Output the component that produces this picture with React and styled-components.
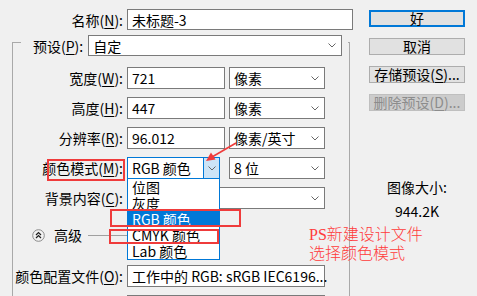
import React from 'react'
import styled, { createGlobalStyle } from 'styled-components'

const GlobalStyle = createGlobalStyle`
  html, body { margin: 0; padding: 0; background: #f0f0f0; }
  body {
    font-family: "Noto Sans CJK SC", "Noto Sans", sans-serif;
    font-size: 14px;
    color: #000;
  }
`;

const Page = styled.div`
  position: relative;
  width: 477px;
  height: 296px;
  overflow: hidden;
  box-sizing: border-box;
  padding-top: 9px;
  display: flex;
  align-items: flex-start;
`;

const Left = styled.div`
  width: 353px;
  display: flex;
  flex-direction: column;
`;

const NameRow = styled.div`
  display: flex;
  align-items: center;
  gap: 4px;
  height: 21px;
`;

const Label = styled.span`
  white-space: nowrap;
  line-height: 16px;
  text-align: right;
  width: ${p => p.$w || 'auto'};
  justify-self: end;
`;

const Key = styled.u`
  text-decoration: underline;
  text-underline-offset: 2px;
`;

const Field = styled.div`
  box-sizing: border-box;
  height: ${p => p.$h || 22}px;
  width: ${p => (p.$w ? p.$w + 'px' : '100%')};
  background: #fff;
  border: 1px solid ${p => (p.$active ? '#0078d7' : '#7a7a7a')};
  display: flex;
  align-items: center;
  justify-content: space-between;
  padding-left: 4px;
  padding-right: ${p => (p.$active ? 0 : 5)}px;
  line-height: 16px;
  white-space: nowrap;
  position: relative;
  grid-column: ${p => p.$span || 'auto'};
`;

const ArrowBox = styled.span`
  align-self: stretch;
  width: 15px;
  background: #cce4f7;
  border-left: 1px solid #0078d7;
  display: flex;
  align-items: center;
  justify-content: center;
`;

const Group = styled.fieldset`
  margin: -1px 0 0 12px;
  padding: 0 0 30px 0;
  width: 338px;
  box-sizing: border-box;
  border: 1px solid #a9a9a9;
  min-width: 0;
`;

const Legend = styled.legend`
  margin-left: 8px;
  padding: 6px 6px 0 12px;
  display: flex;
  align-items: center;
  gap: 5px;
`;

const Grid = styled.div`
  display: grid;
  grid-template-columns: 110px 98px 96px;
  grid-auto-rows: 22px;
  column-gap: 4px;
  row-gap: ${p => p.$gap || 8}px;
  align-items: center;
  margin-top: ${p => p.$top}px;
`;

const AdvRow = styled.div`
  display: flex;
  align-items: center;
  height: 18px;
  margin: 17px 0 0 19px;
`;

const AdvText = styled.span`
  margin-left: 9px;
  line-height: 16px;
`;

const Rule = styled.span`
  margin-left: 6px;
  width: 130px;
  height: 1px;
  background: #a0a0a0;
`;

const Menu = styled.ul`
  position: absolute;
  top: 100%;
  left: -1px;
  width: 93px;
  box-sizing: border-box;
  margin: 0;
  padding: 0;
  list-style: none;
  background: #fff;
  border: 1px solid #0078d7;
  z-index: 2;
`;

const MenuItem = styled.li`
  height: 16px;
  line-height: 16px;
  padding-left: 4px;
  background: ${p => (p.$sel ? '#0078d7' : 'transparent')};
  color: ${p => (p.$sel ? '#fff' : '#000')};
`;

const Right = styled.div`
  margin-left: 16px;
  width: 96px;
  padding-top: 1px;
  display: flex;
  flex-direction: column;
  gap: 11px;
`;

const Button = styled.div`
  box-sizing: border-box;
  height: 17px;
  display: flex;
  align-items: center;
  justify-content: center;
  line-height: 15px;
  background: ${p => (p.$disabled ? '#cccccc' : '#e1e1e1')};
  color: ${p => (p.$disabled ? '#8c8c8c' : '#000')};
  border: ${p => (p.$default ? '2px solid #0078d7' : p.$disabled ? '1px solid #bfbfbf' : '1px solid #adadad')};
`;

const Info = styled.div`
  margin-top: 56px;
  display: flex;
  flex-direction: column;
  align-items: center;
  gap: 6px;
  line-height: 18px;
`;

const Mark = styled.div`
  position: absolute;
  box-sizing: border-box;
  border: 2px solid #ef3b3b;
  z-index: 3;
  pointer-events: none;
`;

const Note = styled.div`
  position: absolute;
  left: 309px;
  top: 225px;
  z-index: 3;
  color: #ff3b3b;
  font-family: "Liberation Serif", "Noto Sans CJK SC", serif;
  font-size: 16px;
  line-height: 19px;
  font-weight: 300;
`;

const ArrowSvg = styled.svg`
  position: absolute;
  left: 200px;
  top: 138px;
  z-index: 3;
`;

const Chevron = () => (
  <svg width="8" height="5" viewBox="0 0 8 5">
    <path d="M0.5 0.5 L4 4 L7.5 0.5" fill="none" stroke="#666" strokeWidth="1" />
  </svg>
);

const Select = ({ children, ...rest }) => (
  <Field {...rest}>
    <span>{children}</span>
    <Chevron />
  </Field>
);

const CollapseIcon = () => (
  <svg width="13" height="13" viewBox="0 0 13 13">
    <circle cx="6.5" cy="6.5" r="5.8" fill="#f2f2f2" stroke="#8a8a8a" strokeWidth="1" />
    <path d="M4 6 L6.5 3.6 L9 6 M4 9 L6.5 6.6 L9 9" fill="none" stroke="#222" strokeWidth="1.3" />
  </svg>
);

const App = () => {
  return (
    <>
      <GlobalStyle />
      <Page>
        <Left>
          <NameRow>
            <Label $w="123px">名称(<Key>N</Key>):</Label>
            <Field $h={21} $w={226}>未标题-3</Field>
          </NameRow>

          <Group>
            <Legend>
              <Label>预设(<Key>P</Key>):</Label>
              <Select $h={21} $w={254}>自定</Select>
            </Legend>

            <Grid $top={11}>
              <Label>宽度(<Key>W</Key>):</Label>
              <Field>721</Field>
              <Select>像素</Select>

              <Label>高度(<Key>H</Key>):</Label>
              <Field>447</Field>
              <Select>像素</Select>

              <Label>分辨率(<Key>R</Key>):</Label>
              <Field>96.012</Field>
              <Select>像素/英寸</Select>

              <Label>颜色模式(<Key>M</Key>):</Label>
              <Field $w={93} $active>
                <span>RGB 颜色</span>
                <ArrowBox><Chevron /></ArrowBox>
                <Menu>
                  <MenuItem>位图</MenuItem>
                  <MenuItem>灰度</MenuItem>
                  <MenuItem $sel>RGB 颜色</MenuItem>
                  <MenuItem>CMYK 颜色</MenuItem>
                  <MenuItem>Lab 颜色</MenuItem>
                </Menu>
              </Field>
              <Select>8 位</Select>

              <Label>背景内容(<Key>C</Key>):</Label>
              <Select $span="2 / 4"></Select>
            </Grid>

            <AdvRow>
              <CollapseIcon />
              <AdvText>高级</AdvText>
              <Rule />
            </AdvRow>

            <Grid $top={21} $gap={8}>
              <Label>颜色配置文件(<Key>O</Key>):</Label>
              <Select $span="2 / 4">工作中的 RGB: sRGB IEC6196...</Select>

              <Label />
              <Select $span="2 / 4"></Select>
            </Grid>
          </Group>
        </Left>

        <Right>
          <Button $default>好</Button>
          <Button>取消</Button>
          <Button>存储预设(<Key>S</Key>)...</Button>
          <Button $disabled>删除预设(<Key>D</Key>)...</Button>
          <Info>
            <span>图像大小:</span>
            <span>944.2K</span>
          </Info>
        </Right>

        <Mark style={{ left: 47, top: 159, width: 78, height: 22 }} />
        <Mark style={{ left: 110, top: 209, width: 131, height: 18 }} />
        <Mark style={{ left: 109, top: 229, width: 110, height: 15 }} />

        <ArrowSvg width="40" height="30" viewBox="0 0 40 30">
          <line x1="36" y1="5" x2="12" y2="19" stroke="#ef3b3b" strokeWidth="1.6" />
          <polygon points="6,23 15.5,21.5 11,14.5" fill="#ef3b3b" />
        </ArrowSvg>

        <Note>
          PS新建设计文件<br />选择颜色模式
        </Note>
      </Page>
    </>
  )
}

export default App
